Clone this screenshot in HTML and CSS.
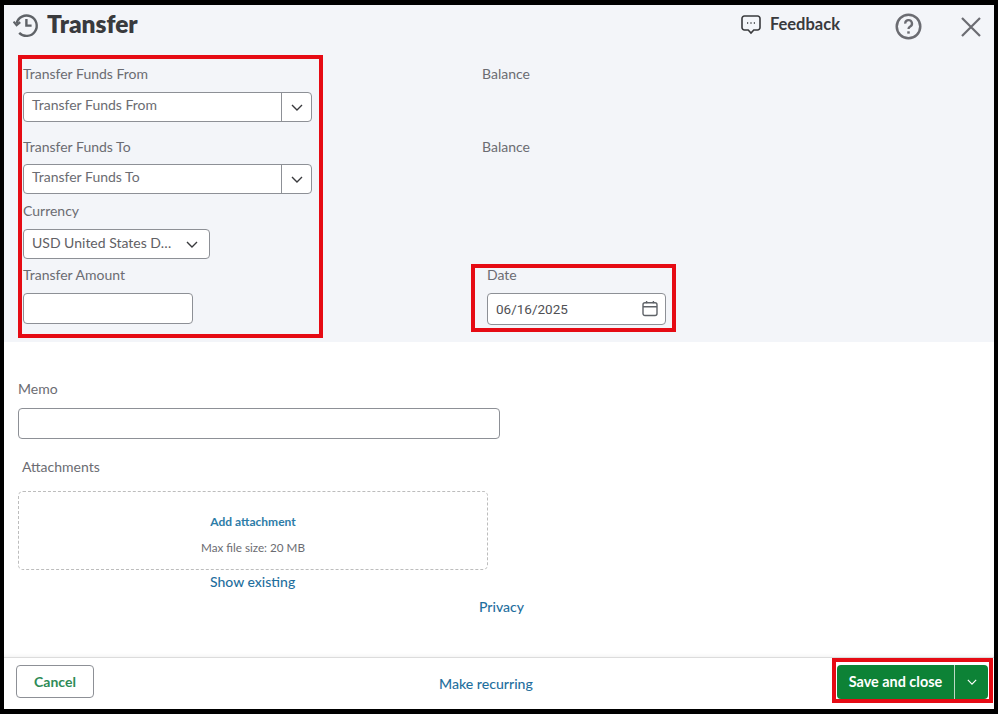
FILE: index.html
```html
<!DOCTYPE html>
<html lang="en">
<head>
<meta charset="utf-8">
<title>Transfer</title>
<link rel="stylesheet" href="styles.css">
</head>
<body>
<div class="frame">
  <section class="top">
    <header class="head">
      <div class="title">
        <svg class="hist" viewBox="0 0 26 26" fill="none" stroke="#5f6368" stroke-width="2.4">
          <path d="M3.6 11.4A10.2 10.2 0 1 1 6.2 20.8"/>
          <path d="M0.6 9.6l3 3.6 3.6-3" stroke-width="2.2" fill="none"/>
          <path d="M13.4 7v6.6h5.2" stroke-width="2.4"/>
        </svg>
        <h1>Transfer</h1>
      </div>
      <div class="tools">
        <svg class="fb" viewBox="0 0 20 20" fill="none" stroke="#393a3d" stroke-width="1.6">
          <path d="M3.4 1h13.2A2.4 2.4 0 0 1 19 3.4v9.2a2.4 2.4 0 0 1-2.4 2.4h-3.8L10 18l-2.8-3H3.4A2.4 2.4 0 0 1 1 12.6V3.4A2.4 2.4 0 0 1 3.4 1z"/>
          <path d="M6 8h1.2M9.4 8h1.2M12.8 8H14" stroke-width="1.4"/>
        </svg>
        <span class="fbtext">Feedback</span>
        <svg class="help" viewBox="0 0 28 28" fill="none" stroke="#6b6c72" stroke-width="2.6">
          <circle cx="14" cy="14" r="12.2"/>
          <path d="M10.6 11a3.5 3.5 0 1 1 5.2 3c-1.2.7-1.8 1.4-1.8 2.6" stroke-width="2.4"/>
          <path d="M14 19v2.4" stroke-width="2.6"/>
        </svg>
        <svg class="close" viewBox="0 0 20 20" fill="none" stroke="#6b6c72" stroke-width="2.2">
          <path d="M1 1l18 18M19 1L1 19"/>
        </svg>
      </div>
    </header>
    <div class="form">
      <div class="mark left">
        <div class="label">Transfer Funds From</div>
        <div class="combo">
          <span class="val">Transfer Funds From</span>
          <span class="drop"><svg class="chev" viewBox="0 0 12 7" fill="none" stroke="#393a3d" stroke-width="1.4"><path d="M1 1l5 5 5-5"/></svg></span>
        </div>
        <div class="label second">Transfer Funds To</div>
        <div class="combo">
          <span class="val">Transfer Funds To</span>
          <span class="drop"><svg class="chev" viewBox="0 0 12 7" fill="none" stroke="#393a3d" stroke-width="1.4"><path d="M1 1l5 5 5-5"/></svg></span>
        </div>
        <div class="label third">Currency</div>
        <div class="currency">
          <span class="curval">USD United States D…</span>
          <svg class="chev" viewBox="0 0 12 7" fill="none" stroke="#393a3d" stroke-width="1.4"><path d="M1 1l5 5 5-5"/></svg>
        </div>
        <div class="label fourth">Transfer Amount</div>
        <div class="amount"></div>
      </div>
      <div class="right">
        <div class="label bal">Balance</div>
        <div class="label bal2">Balance</div>
        <div class="mark datebox">
          <div class="label datelabel">Date</div>
          <div class="dateinput">
            <span class="dateval">06/16/2025</span>
            <svg class="cal" viewBox="0 0 16 16" fill="none" stroke="#5f6368" stroke-width="1.4">
              <rect x="1" y="2.2" width="14" height="12.8" rx="2"/>
              <path d="M1 6.2h14M4.6 0.4v2.4M11.4 0.4v2.4"/>
            </svg>
          </div>
        </div>
      </div>
    </div>
  </section>
  <main class="bottom">
    <div class="label memolabel">Memo</div>
    <div class="memo"></div>
    <div class="label attlabel">Attachments</div>
    <div class="drops">
      <a class="addlink">Add attachment</a>
      <span class="max">Max file size: 20 MB</span>
    </div>
    <a class="link show">Show existing</a>
    <a class="link privacy">Privacy</a>
  </main>
  <footer class="foot">
    <button class="cancel">Cancel</button>
    <a class="link recurring">Make recurring</a>
    <div class="mark savebox">
      <div class="save">
        <span class="savetext">Save and close</span>
        <span class="savedrop"><svg class="chevw" viewBox="0 0 12 7" fill="none" stroke="#fff" stroke-width="1.4"><path d="M1 1l5 5 5-5"/></svg></span>
      </div>
    </div>
  </footer>
</div>
</body>
</html>
```
FILE: styles.css
```css
* { box-sizing: border-box; }
html, body { margin: 0; padding: 0; background: #fff; }
body { width: 999px; height: 715px; overflow: hidden; font-family: "Lato", "Liberation Sans", sans-serif; color: #6b6c72; }
.frame { width: 998px; height: 714px; border: solid #000; border-width: 5px 4px 5px 4px; display: flex; flex-direction: column; background: #fff; }
.top { background: #f3f5f9; height: 337px; flex: none; display: flex; flex-direction: column; }
.head { height: 50px; flex: none; display: flex; align-items: flex-start; justify-content: space-between; }
.title { display: flex; align-items: center; margin: 7px 0 0 9px; }
.hist { width: 26px; height: 26px; }
h1 { margin: -3px 0 0 8px; font-size: 24.5px; line-height: 26px; font-weight: 800; color: #393a3d; letter-spacing: 0; }
.tools { display: flex; align-items: center; margin-top: 8px; }
.fb { width: 20px; height: 20px; margin-top: -4px; }
.fbtext { font-size: 16.5px; font-weight: 700; color: #393a3d; margin: -5px 0 0 9px; }
.help { width: 27px; height: 27px; margin-left: 55px; }
.close { width: 20px; height: 20px; margin: 0 13px 0 39px; }
.form { display: flex; align-items: flex-start; }
.mark { border: 4px solid #e60b14; }
.left { margin-left: 14px; width: 305px; height: 283px; padding: 6px 0 0 1px; display: flex; flex-direction: column; align-items: flex-start; }
.label { font-size: 14px; line-height: 17px; color: #6b6c72; }
.combo { margin-top: 10px; width: 289px; height: 30px; border: 1px solid #8d9096; border-radius: 4px; background: #fff; display: flex; align-items: center; }
.second + .combo { margin-top: 9px; }
.val { flex: 1; padding: 0 0 5px 8px; font-size: 14px; color: #6b6c72; }
.drop { width: 30px; height: 100%; border-left: 1px solid #8d9096; display: flex; align-items: center; justify-content: center; flex: none; }
.chev { width: 12px; height: 7px; flex: none; }
.second { margin-top: 16px; }
.third { margin-top: 8px; }
.currency { margin-top: 10px; width: 187px; height: 30px; border: 1px solid #8d9096; border-radius: 4px; background: #fff; display: flex; align-items: center; justify-content: space-between; padding: 0 11px 0 8px; }
.curval { font-size: 14px; color: #5f6064; white-space: nowrap; padding-bottom: 3px; }
.fourth { margin-top: 7px; }
.amount { margin-top: 10px; width: 170px; height: 31px; border: 1px solid #8d9096; border-radius: 4px; background: #fff; }
.right { margin-left: 148px; width: 205px; display: flex; flex-direction: column; align-items: flex-start; }
.bal { margin: 10px 0 0 11px; }
.bal2 { margin: 56px 0 0 11px; }
.datebox { margin-top: 109px; width: 205px; height: 68px; padding: 0 0 0 12px; }
.datelabel { line-height: 14px; }
.dateinput { margin-top: 11px; width: 179px; height: 32px; border: 1px solid #8d9096; border-radius: 4px; background: #fff; display: flex; align-items: center; justify-content: space-between; padding: 0 7px 0 8px; }
.dateval { font-family: "Roboto", "Liberation Sans", sans-serif; font-size: 13.5px; color: #4f5054; }
.cal { width: 16px; height: 17px; margin-top: -2px; }
.bottom { flex: 1; display: flex; flex-direction: column; align-items: flex-start; padding: 38px 0 0 14px; border-bottom: 1px solid #dcdcdc; box-shadow: inset 0 -5px 5px -5px rgba(0,0,0,.08); }
.memolabel { line-height: 17px; }
.memo { margin-top: 11px; width: 482px; height: 31px; border: 1px solid #8d9096; border-radius: 4px; background: #fff; }
.attlabel { margin: 19px 0 0 4px; }
.drops { margin-top: 16px; width: 470px; height: 79px; border: 1px dashed #bdbdbd; border-radius: 5px; display: flex; flex-direction: column; align-items: center; }
.addlink { margin-top: 22px; font-size: 12px; font-weight: 700; line-height: 15px; color: #2d7ca8; }
.max { margin-top: 11px; font-size: 11.7px; line-height: 14px; color: #6b6c72; }
.link { color: #1f6f9e; font-size: 14px; line-height: 17px; font-weight: 500; }
.show { margin: 3px 0 0 192px; }
.privacy { margin: 8px 0 0 461px; }
.foot { height: 51px; flex: none; display: flex; align-items: flex-start; position: relative; }
.cancel { margin: 7px 0 0 12px; width: 78px; height: 33px; border: 1px solid #8d9096; border-radius: 4px; background: #fff; font-family: "Lato", "Liberation Sans", sans-serif; font-size: 14px; font-weight: 700; color: #2e8b57; padding: 0; }
.recurring { margin: 17px 0 0 345px; font-size: 14.1px; }
.savebox { margin: 0 1px 0 auto; width: 161px; height: 45px; padding: 3px 1px 0 1px; border-width: 4px; }
.save { width: 151px; height: 34px; background: #0d8236; border-radius: 4px; display: flex; align-items: stretch; color: #fff; }
.savetext { width: 118px; display: flex; align-items: center; justify-content: center; font-size: 14.4px; font-weight: 700; padding-bottom: 1px; border-right: 1px solid #bcd9c6; }
.savedrop { flex: 1; display: flex; align-items: center; justify-content: center; }
.chevw { width: 10px; height: 6px; }
```
